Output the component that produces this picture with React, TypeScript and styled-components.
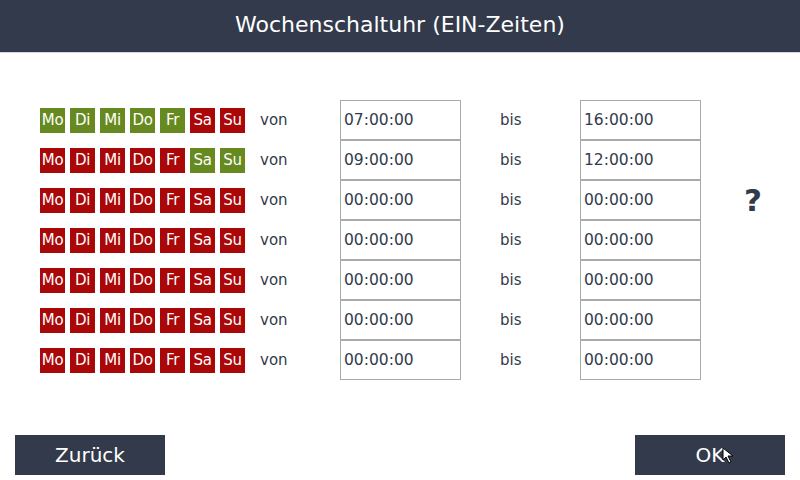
import React from "react";
import styled, { createGlobalStyle } from "styled-components";

const GlobalStyle = createGlobalStyle`
  html, body {
    margin: 0;
    padding: 0;
    background: #ffffff;
    font-family: "DejaVu Sans", "Liberation Sans", sans-serif;
  }
`;

const Screen = styled.div`
  width: 800px;
  height: 480px;
  display: flex;
  flex-direction: column;
  background: #ffffff;
  overflow: hidden;
`;

const Header = styled.div`
  height: 53px;
  flex-shrink: 0;
  box-sizing: border-box;
  background: #323a4b;
  border-bottom: 1px solid #d4d8e2;
  display: flex;
  align-items: center;
  justify-content: center;
  padding-bottom: 4px;
  color: #ffffff;
  font-size: 22px;
`;

const Main = styled.div`
  flex: 1;
  padding: 47px 0 0 40px;
`;

const Schedule = styled.div`
  display: grid;
  grid-template-columns: 220px 80px 121px 119px 121px 60px;
  grid-auto-rows: 40px;
  align-items: center;
`;

const Days = styled.div`
  display: flex;
  gap: 5px;
`;

const Day = styled.div<{ $on: boolean }>`
  width: 25px;
  height: 25px;
  display: flex;
  align-items: center;
  justify-content: center;
  background: ${(p) => (p.$on ? "#678a20" : "#aa0808")};
  color: #ffffff;
  font-size: 15px;
  letter-spacing: -0.3px;
`;

const Label = styled.div<{ $indent?: number }>`
  color: #333b4b;
  font-size: 15px;
  padding-left: ${(p) => p.$indent ?? 0}px;
`;

const TimeBox = styled.div`
  height: 40px;
  box-sizing: border-box;
  border: 1px solid #a9abab;
  display: flex;
  align-items: center;
  padding-left: 3px;
  color: #333b4b;
  font-size: 15.5px;
`;

const Help = styled.div<{ $row: number }>`
  grid-column: 6;
  grid-row: ${(p) => p.$row};
  align-self: start;
  padding: 0 0 0 43px;
  color: #333b4b;
  font-size: 31px;
  font-weight: bold;
  line-height: 40px;
`;

const Footer = styled.div`
  display: flex;
  justify-content: space-between;
  padding: 0 15px 5px 15px;
`;

const Button = styled.div`
  position: relative;
  width: 150px;
  height: 40px;
  background: #323a4b;
  color: #ffffff;
  font-size: 20px;
  display: flex;
  align-items: center;
  justify-content: center;
`;

const Cursor = styled.svg`
  position: absolute;
  left: 87px;
  top: 12px;
`;

const dayNames = ["Mo", "Di", "Mi", "Do", "Fr", "Sa", "Su"];

const rows = [
  { days: [1, 1, 1, 1, 1, 0, 0], from: "07:00:00", to: "16:00:00" },
  { days: [0, 0, 0, 0, 0, 1, 1], from: "09:00:00", to: "12:00:00" },
  { days: [0, 0, 0, 0, 0, 0, 0], from: "00:00:00", to: "00:00:00" },
  { days: [0, 0, 0, 0, 0, 0, 0], from: "00:00:00", to: "00:00:00" },
  { days: [0, 0, 0, 0, 0, 0, 0], from: "00:00:00", to: "00:00:00" },
  { days: [0, 0, 0, 0, 0, 0, 0], from: "00:00:00", to: "00:00:00" },
  { days: [0, 0, 0, 0, 0, 0, 0], from: "00:00:00", to: "00:00:00" },
];

const App: React.FC = () => {
  return (
    <Screen>
      <GlobalStyle />
      <Header>Wochenschaltuhr (EIN-Zeiten)</Header>
      <Main>
        <Schedule>
          {rows.map((row, i) => (
            <React.Fragment key={i}>
              <Days>
                {dayNames.map((d, j) => (
                  <Day key={d} $on={row.days[j] === 1}>
                    {d}
                  </Day>
                ))}
              </Days>
              <Label>von</Label>
              <TimeBox>{row.from}</TimeBox>
              <Label $indent={39}>bis</Label>
              <TimeBox>{row.to}</TimeBox>
              {i === 2 ? <Help $row={3}>?</Help> : <div />}
            </React.Fragment>
          ))}
        </Schedule>
      </Main>
      <Footer>
        <Button>Zurück</Button>
        <Button>
          OK
          <Cursor width="14" height="18" viewBox="0 0 14 18">
            <path
              d="M1 1 L1 13 L4 10 L7 16 L9 15 L6 9 L11 9 Z"
              fill="#ffffff"
              stroke="#000000"
              strokeWidth="1"
              strokeLinejoin="round"
            />
          </Cursor>
        </Button>
      </Footer>
    </Screen>
  );
};

export default App;
